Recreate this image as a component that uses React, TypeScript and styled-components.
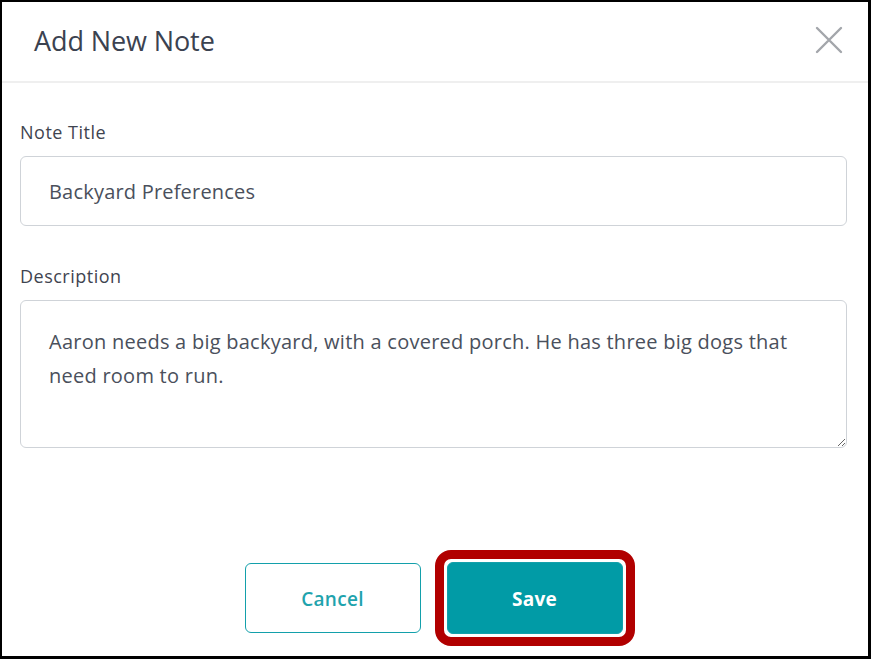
import React from "react";
import styled, { createGlobalStyle } from "styled-components";

const Global = createGlobalStyle`
  html, body { margin: 0; padding: 0; background: #ffffff; }
  * { box-sizing: border-box; }
  body { font-family: "Open Sans", "Noto Sans", sans-serif; }
`;

const Frame = styled.div`
  width: 871px;
  height: 659px;
  border-style: solid;
  border-color: #000;
  border-width: 2px 3px 3px 2px;
  background: #fff;
  display: flex;
  flex-direction: column;
`;

const Header = styled.header`
  height: 81px;
  display: flex;
  align-items: center;
  justify-content: space-between;
  padding: 0 24px 3px 32px;
  border-bottom: 2px solid #efefef;
`;

const Title = styled.h2`
  margin: 0;
  font-size: 27px;
  font-weight: 400;
  color: #3b4250;
  letter-spacing: -0.1px;
`;

const CloseButton = styled.button`
  border: none;
  background: none;
  padding: 0;
  width: 30px;
  height: 30px;
  display: flex;
  align-items: center;
  justify-content: center;
  cursor: pointer;
`;

const Body = styled.div`
  padding: 37px 21px 0 18px;
  display: flex;
  flex-direction: column;
`;

const Label = styled.label`
  font-size: 18px;
  color: #3f4450;
  line-height: 24px;
  letter-spacing: 0.5px;
  margin-bottom: 12px;
`;

const Field = styled.div<{ $gap?: number }>`
  display: flex;
  flex-direction: column;
  margin-bottom: ${(p) => p.$gap ?? 0}px;
`;

const TextInput = styled.input`
  height: 70px;
  width: 100%;
  border: 1px solid #cfd3d8;
  border-radius: 6px;
  padding: 0 28px;
  font-family: inherit;
  font-size: 20px;
  letter-spacing: 0.2px;
  color: #4a505c;
  outline: none;
`;

const TextArea = styled.textarea`
  height: 148px;
  width: 100%;
  border: 1px solid #cfd3d8;
  border-radius: 6px;
  padding: 24px 28px;
  font-family: inherit;
  font-size: 20px;
  letter-spacing: 0.25px;
  line-height: 34px;
  color: #4a505c;
  outline: none;
  resize: vertical;
`;

const Footer = styled.footer`
  margin-top: auto;
  padding: 0 0 10px 9px;
  display: flex;
  justify-content: center;
  align-items: center;
  gap: 14px;
`;

const Button = styled.button<{ $primary?: boolean }>`
  width: 176px;
  height: ${(p) => (p.$primary ? 72 : 70)}px;
  border-radius: 6px;
  font-family: inherit;
  font-size: 19px;
  letter-spacing: 0.3px;
  padding-top: 2px;
  cursor: pointer;
  border: 1px solid #13a0ab;
  background: ${(p) => (p.$primary ? "#019ba6" : "#ffffff")};
  color: ${(p) => (p.$primary ? "#ffffff" : "#1fa3ad")};
  font-weight: ${(p) => (p.$primary ? 700 : 600)};
`;

const Highlight = styled.div`
  border: 9px solid #b10000;
  border-radius: 16px;
  padding: 3px;
  display: flex;
`;

export default function App() {
  return (
    <>
      <Global />
      <Frame>
        <Header>
          <Title>Add New Note</Title>
          <CloseButton aria-label="Close">
            <svg width="28" height="28" viewBox="0 0 28 28">
              <path d="M2 2 L26 26 M26 2 L2 26" stroke="#a3a6ab" strokeWidth="2.4" strokeLinecap="round" />
            </svg>
          </CloseButton>
        </Header>
        <Body>
          <Field $gap={38}>
            <Label>Note Title</Label>
            <TextInput defaultValue="Backyard Preferences" />
          </Field>
          <Field>
            <Label>Description</Label>
            <TextArea defaultValue="Aaron needs a big backyard, with a covered porch. He has three big dogs that need room to run." />
          </Field>
        </Body>
        <Footer>
          <Button>Cancel</Button>
          <Highlight>
            <Button $primary>Save</Button>
          </Highlight>
        </Footer>
      </Frame>
    </>
  );
}
